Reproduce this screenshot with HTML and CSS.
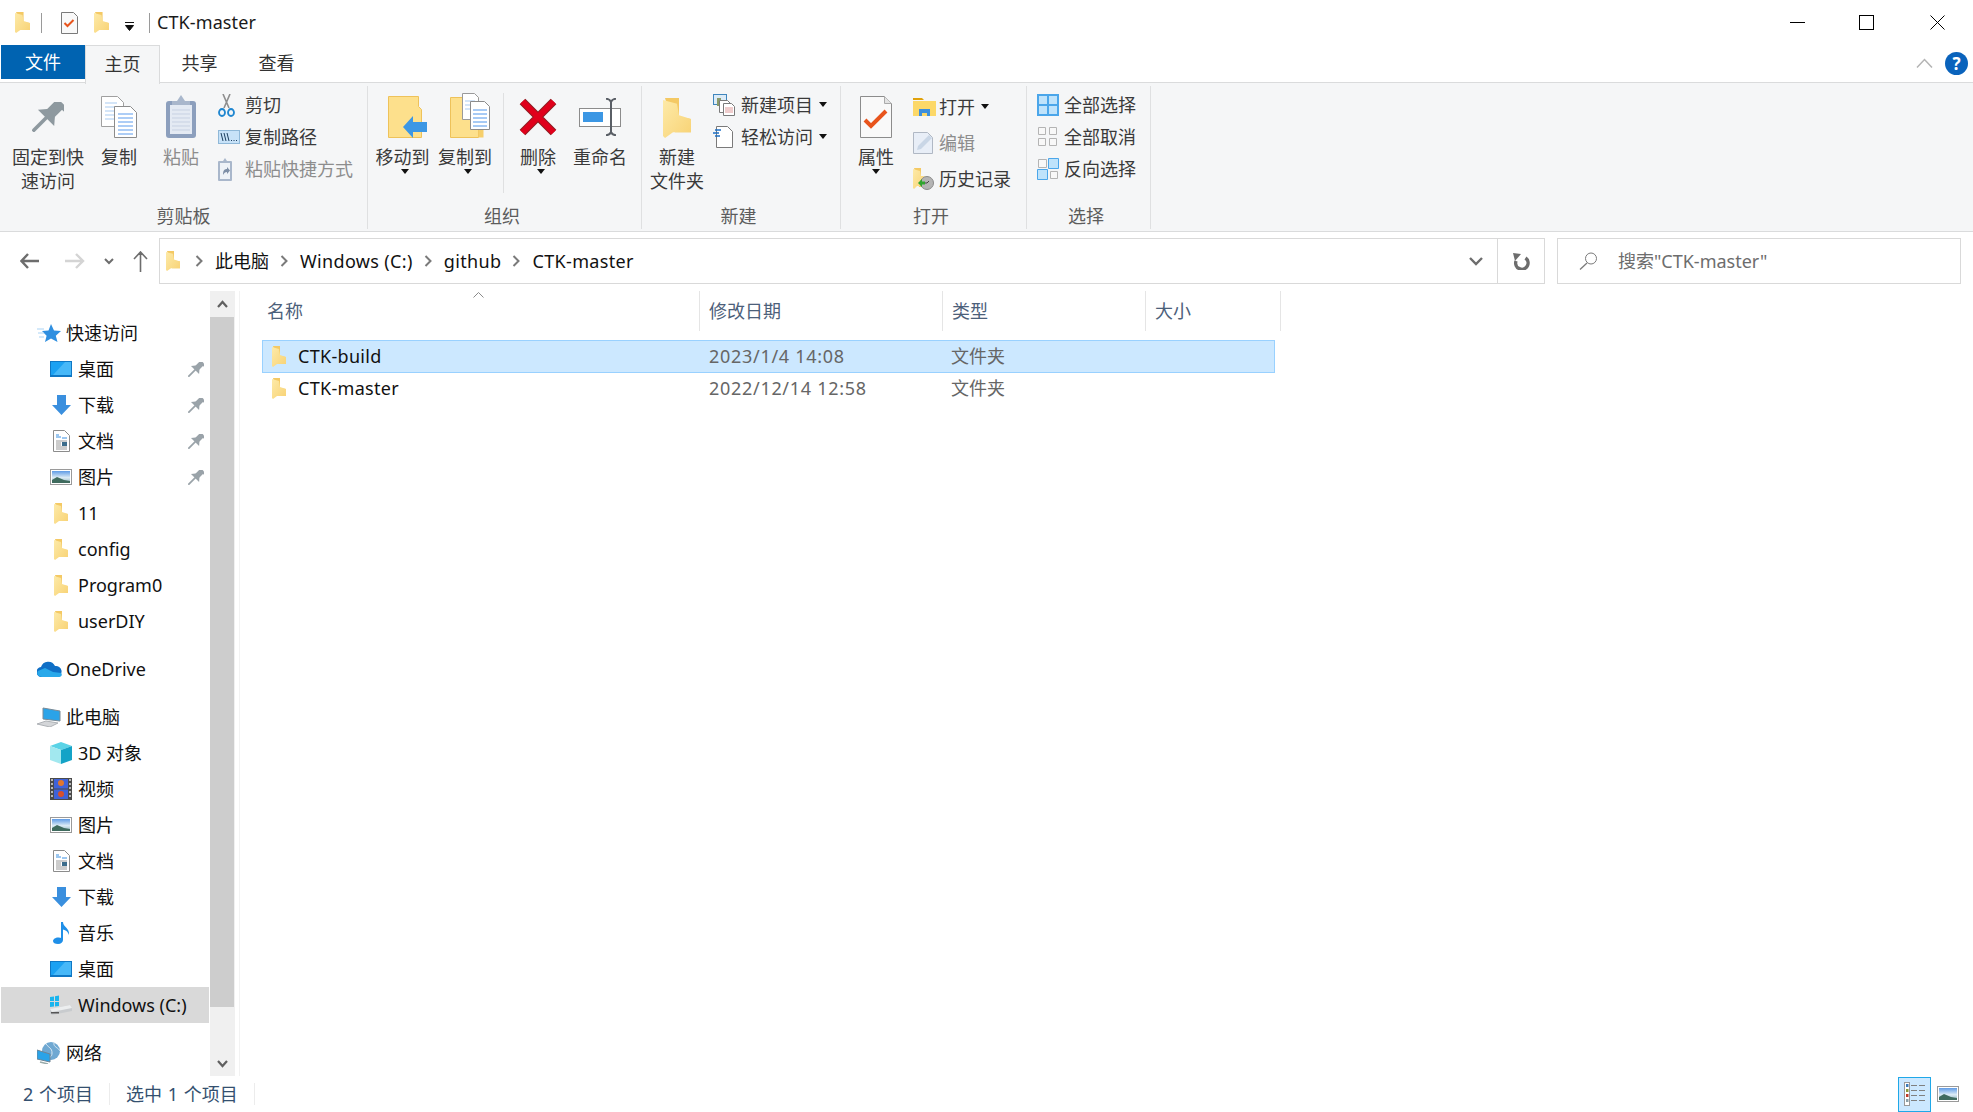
FILE: index.html
```html
<!DOCTYPE html>
<html lang="zh-CN">
<head>
    <meta charset="UTF-8">
    <title>CTK-master</title>
    <link rel="stylesheet" href="styles.css">
</head>
<body>

<svg class="defs" xmlns="http://www.w3.org/2000/svg">
    <defs>
        <linearGradient id="fold" x1="0" y1="0" x2="1" y2="1">
            <stop offset="0" stop-color="#fdeaa8"/>
            <stop offset="1" stop-color="#f8d274"/>
        </linearGradient>
        <linearGradient id="sky" x1="0" y1="0" x2="0" y2="1">
            <stop offset="0" stop-color="#5f9be6"/>
            <stop offset=".55" stop-color="#dcebf5"/>
            <stop offset="1" stop-color="#8fb3bd"/>
        </linearGradient>
    </defs>

    <symbol id="folder" viewBox="0 0 14 21" preserveAspectRatio="none">
        <path d="M1 0h7v10l6 1v7H6z" fill="#f4c964"/>
        <path d="M0 1l7 2 1 6 6 2v7H5l-4 3-1-1z" fill="url(#fold)"/>
    </symbol>
    <symbol id="pin" viewBox="0 0 32 30" preserveAspectRatio="none">
        <g transform="translate(19 11) rotate(45)" fill="currentColor">
            <rect x="-8" y="-15" width="16" height="5"/>
            <rect x="-5.500" y="-12" width="11" height="14"/>
            <path d="M-5.500 0h11l6 7h-23z"/>
            <rect x="-1.800" y="6" width="3.600" height="20"/>
        </g>
    </symbol>
    <symbol id="copy" viewBox="0 0 36 42" preserveAspectRatio="none">
        <path d="M.5.5h16l6 6v24H.5z" fill="#fff" stroke="#a0a0a0"/>
        <path d="M4 7h12M4 11h15M4 15h15M4 19h15M4 23h10" stroke="#a9cbf2" stroke-width="1.2"/>
        <path d="M13.5 10.500h16l6 6v25h-22z" fill="#fff" stroke="#8c8c8c"/>
        <path d="M17 18h15M17 22h15M17 26h15M17 30h15M17 34h15M17 38h15" stroke="#5c9cee" stroke-width="1.2"/>
    </symbol>
    <symbol id="paste" viewBox="0 0 30 43" preserveAspectRatio="none">
        <rect x="0" y="6" width="30" height="37" rx="3" fill="#8c9fbd"/>
        <rect x="4" y="10" width="22" height="29" fill="#e4eaf3"/>
        <path d="M6 15h18M6 19h18M6 23h18M6 27h18M6 31h18M6 35h18" stroke="#c7d1e2"/>
        <path d="M15 0l4 6h5v4H6V6h5z" fill="#a9b7cc"/>
    </symbol>
    <symbol id="scissors" viewBox="0 0 17 23" preserveAspectRatio="none">
        <path d="M5 0l6 14M12 0L6 14" stroke="#8e8e8e" stroke-width="1.600" fill="none"/>
        <ellipse cx="4" cy="18.500" rx="3" ry="3.500" fill="none" stroke="#1f86d0" stroke-width="1.800"/>
        <ellipse cx="13" cy="18.500" rx="3" ry="3.500" fill="none" stroke="#1f86d0" stroke-width="1.800"/>
    </symbol>
    <symbol id="copypath" viewBox="0 0 22 14" preserveAspectRatio="none">
        <rect x=".5" y=".5" width="21" height="13" fill="#c7e2f8" stroke="#8fb8d8"/>
        <path d="M3 3l2 8M6 3l2 8M9 3l2 8" stroke="#1c3f5f" fill="none"/>
        <path d="M13 10.500h1M15.500 10.500h1M18 10.500h1" stroke="#1c3f5f"/>
    </symbol>
    <symbol id="shortcut" viewBox="0 0 14 23" preserveAspectRatio="none">
        <rect x="0" y="3" width="14" height="20" rx="1" fill="#a9b7cb"/>
        <rect x="2" y="5" width="10" height="16" fill="#eef2f7"/>
        <path d="M7 0l2 3H5z" fill="#a9b7cb"/>
        <path d="M5 17c0-4 1-6 4-6V9l3 3.500-3 3.500v-2c-2 0-3 1-4 3z" fill="#7d8ea6"/>
    </symbol>
    <symbol id="moveto" viewBox="0 0 39 42" preserveAspectRatio="none">
        <path d="M.5.5h30v10l3 3v28H.5z" fill="#fde08c" stroke="#eec25a"/>
        <path d="M15 31l10-11v6h14v10H25v6z" fill="#3c97e4"/>
    </symbol>
    <symbol id="copyto" viewBox="0 0 40 45" preserveAspectRatio="none">
        <path d="M.5 4.500h28v40H.5z" fill="#fde08c" stroke="#eec25a"/>
        <path d="M28.500 20h5v24.500h-5z" fill="#f6cf6b"/>
        <path d="M12.500.500h12l4 4v22h-16z" fill="#fff" stroke="#9a9a9a"/>
        <path d="M15 8h10M15 12h10M15 16h10" stroke="#a9cbf2"/>
        <path d="M20.500 8.500h14l5 5v23h-19z" fill="#fff" stroke="#8c8c8c"/>
        <path d="M23 17h14M23 21h14M23 25h14M23 29h14M23 33h14" stroke="#4f95ea"/>
    </symbol>
    <symbol id="del" viewBox="0 0 38 38" preserveAspectRatio="none">
        <path d="M3.500 3.500l31 31M34.500 3.500l-31 31" stroke="#8f1d22" stroke-width="8" fill="none"/>
        <path d="M3.500 3.500l31 31M34.500 3.500l-31 31" stroke="#e0001b" stroke-width="6" fill="none"/>
    </symbol>
    <symbol id="rename" viewBox="0 0 42 38" preserveAspectRatio="none">
        <rect x=".5" y="10.500" width="41" height="18" fill="#fff" stroke="#8c8c8c"/>
        <rect x="4" y="14" width="20" height="10" fill="#3c97e4"/>
        <path d="M27 .8c3 0 4 1 5 3 1-2 2-3 5-3M27 37.200c3 0 4-1 5-3 1 2 2 3 5 3M32 4v30" stroke="#5a5f66" stroke-width="2" fill="none"/>
    </symbol>
    <symbol id="newitem" viewBox="0 0 22 22" preserveAspectRatio="none">
        <rect x=".5" y=".5" width="13" height="10" fill="#dcebf7" stroke="#3f86bd"/>
        <rect x="4" y="4" width="4" height="8" fill="#8a9a6a"/>
        <path d="M6.500 6.500h8l3 3v9h-11z" fill="#fff" stroke="#7a7a7a"/>
        <path d="M10.500 9.500h8l3 3v9h-11z" fill="#fff" stroke="#7a7a7a"/>
        <path d="M12 14h8M12 16h8M12 18h8" stroke="#e09a9a"/>
    </symbol>
    <symbol id="easy" viewBox="0 0 20 22" preserveAspectRatio="none">
        <path d="M3.500.5h11l5 5v16h-16z" fill="#fff" stroke="#7a7a7a"/>
        <path d="M2 4h6M0 7h6M2 10h5" stroke="#1c6fc4" stroke-width="1.300"/>
    </symbol>
    <symbol id="props" viewBox="0 0 32 42" preserveAspectRatio="none">
        <path d="M.5.5h24l7 7v34H.5z" fill="#f9f9f9" stroke="#8c8c8c"/>
        <path d="M24.500.5v7h7" fill="#e3e3e3" stroke="#aaa"/>
        <path d="M5 24l6 6 15-15" fill="none" stroke="#e8541c" stroke-width="4"/>
    </symbol>
    <symbol id="doccheck" viewBox="0 0 17 22" preserveAspectRatio="none">
        <path d="M.5.5h12l4 4v17H.5z" fill="#f9f9f9" stroke="#7a7a7a"/>
        <path d="M3.500 11l3 3 6-6" fill="none" stroke="#e8541c" stroke-width="2"/>
    </symbol>
    <symbol id="open" viewBox="0 0 23 18" preserveAspectRatio="none">
        <path d="M0 0h9l2 2h-11z" fill="#e0a10b"/>
        <path d="M0 3h23v15H0z" fill="#fcd868"/>
        <path d="M6 18v-7h11v7h-3v-3H9v3z" fill="#3c8fdb"/>
    </symbol>
    <symbol id="edit" viewBox="0 0 21 22" preserveAspectRatio="none">
        <path d="M.5.5h14l5 5v16H.5z" fill="#e8eef7" stroke="#b0b8c4"/>
        <path d="M4 18l1-4L16 3l3 3L8 17z" fill="#c9d6e6"/>
    </symbol>
    <symbol id="history" viewBox="0 0 21 22" preserveAspectRatio="none">
        <path d="M1 0h7v8l5 1v10H6z" fill="#f4c964"/>
        <path d="M0 1l7 2 1 5 5 1v9H4l-3 3-1-1z" fill="url(#fold)"/>
        <circle cx="14" cy="15" r="6.500" fill="#b4b4b4" stroke="#8a8a8a"/>
        <path d="M11 15h3l2-2" stroke="#444" fill="none"/>
        <path d="M5 15l4-4v2.500h3v3H9V19z" fill="#2fa52f"/>
    </symbol>
    <symbol id="selall" viewBox="0 0 22 22" preserveAspectRatio="none">
        <rect x="1" y="1" width="20" height="20" fill="#bfe3fb" stroke="#4ba6ea" stroke-width="2"/>
        <path d="M11 1v20M1 11h20" stroke="#4ba6ea" stroke-width="2"/>
    </symbol>
    <symbol id="selnone" viewBox="0 0 22 22" preserveAspectRatio="none">
        <path d="M1.500 1.500h7v7h-7zM12.500 1.500h7v7h-7zM1.500 12.500h7v7h-7zM12.500 12.500h7v7h-7z" fill="#f8f8f8" stroke="#b4b4b4"/>
    </symbol>
    <symbol id="selinv" viewBox="0 0 22 22" preserveAspectRatio="none">
        <path d="M1.500 1.500h8v8h-8zM13.500 13.500h7v7h-7z" fill="#f8f8f8" stroke="#b4b4b4"/>
        <path d="M11.500.5h10v10h-10zM.5 11.500h10v10H.5z" fill="#bfe3fb" stroke="#4ba6ea"/>
    </symbol>

    <symbol id="star" viewBox="0 0 24 18" preserveAspectRatio="none">
        <path d="M14 0l3 6.500 7 .5-5.200 4.700L20.500 18 14 14.500 8 18l1.600-6.300L5 7l6.500-.5z" fill="#2f8fe0"/>
        <path d="M0 5h7M1 9h6M2 13h5" stroke="#a9d3f5"/>
    </symbol>
    <symbol id="desktop" viewBox="0 0 22 16" preserveAspectRatio="none">
        <rect x="0" y="0" width="22" height="16" fill="#0f77c4"/>
        <rect x="1" y="1" width="20" height="13" fill="#1ba1f2"/>
        <path d="M3 14L15 1h6v13z" fill="#47b8f8"/>
    </symbol>
    <symbol id="down" viewBox="0 0 19 20" preserveAspectRatio="none">
        <path d="M5 0h9v10h5l-9.500 10L0 10h5z" fill="#3a8fde"/>
    </symbol>
    <symbol id="doc" viewBox="0 0 17 22" preserveAspectRatio="none">
        <path d="M.5.5h11l5 5v16H.5z" fill="#fff" stroke="#8c8c8c"/>
        <path d="M3 5h3M3 7h5M9 8h5" stroke="#3b8fe0"/>
        <path d="M3 11h11M3 13h5M3 15h5M3 17h11M3 19h11" stroke="#9a9a9a"/>
        <rect x="9" y="12" width="5" height="4" fill="#3d6d8c"/>
    </symbol>
    <symbol id="pic" viewBox="0 0 22 16" preserveAspectRatio="none">
        <rect x=".5" y=".5" width="21" height="15" fill="#fff" stroke="#9a9a9a"/>
        <rect x="2" y="2" width="18" height="12" fill="url(#sky)"/>
        <path d="M2 11l5-3 7 3 6 1v2H2z" fill="#3f6b5e"/>
    </symbol>
    <symbol id="cloud" viewBox="0 0 25 16" preserveAspectRatio="none">
        <path d="M5 16a5 5 0 0 1-1-10 7.500 7.500 0 0 1 14-1 5.500 5.500 0 0 1 2 11z" fill="#0f6fc6"/>
        <path d="M5 16c-4 0-6-3-4-6l7-3 8 4 8 1c2 2 0 4-3 4z" fill="#28a8ea"/>
    </symbol>
    <symbol id="pc" viewBox="0 0 24 20" preserveAspectRatio="none">
        <path d="M6 1l17 3v10L6 12z" fill="#2aa3e8" stroke="#7a8a96"/>
        <path d="M0 17l9-3 12 2-8 4z" fill="#d4d6d9" stroke="#aeb2b6"/>
    </symbol>
    <symbol id="cube" viewBox="0 0 22 22" preserveAspectRatio="none">
        <path d="M11 0l11 4-11 4L0 4z" fill="#5ad3e6"/>
        <path d="M0 4l11 4v14L0 18z" fill="#a2e8ef"/>
        <path d="M22 4L11 8v14l11-4z" fill="#14a3c7"/>
    </symbol>
    <symbol id="film" viewBox="0 0 22 22" preserveAspectRatio="none">
        <rect width="22" height="22" fill="#4a4a4a"/>
        <rect x="4" y="1" width="14" height="9.500" fill="#3f62d8"/>
        <rect x="4" y="11.500" width="14" height="9.500" fill="#3f62d8"/>
        <circle cx="11" cy="5" r="3" fill="#e2762b"/>
        <circle cx="11" cy="16" r="3" fill="#d8502b"/>
        <path d="M1 2h2M1 6h2M1 10h2M1 14h2M1 18h2M19 2h2M19 6h2M19 10h2M19 14h2M19 18h2" stroke="#ddd" stroke-width="1.500"/>
    </symbol>
    <symbol id="music" viewBox="0 0 17 22" preserveAspectRatio="none">
        <path d="M8 0h2c0 5 7 6 6 13-1-3-3-5-6-5.500V18c0 2-2 4-5 4s-5-1-5-3 3-4 6-3.500 2 .5 2 .5z" fill="#1f8fe8"/>
    </symbol>
    <symbol id="drive" viewBox="0 0 22 20" preserveAspectRatio="none">
        <path d="M0 14l20-4 2 3v3L2 20l-2-2z" fill="#c8cbce"/>
        <path d="M0 14l20-4 2 3-20 4z" fill="#eceeef"/>
        <rect x="1" y="17" width="8" height="1.500" fill="#555"/>
        <path d="M0 2l4-.6V6H0zM5 1.200L9 .5V6H5zM0 7h4v4.500L0 12zM5 7h4v4l-4 .6z" fill="#19b5ee"/>
    </symbol>
    <symbol id="net" viewBox="0 0 24 22" preserveAspectRatio="none">
        <circle cx="14" cy="9" r="9" fill="#6fa8d2"/>
        <path d="M9 2c3 4 6 4 6 9s-3 3-3 6M17 1c-1 4 5 5 6 8" stroke="#d9e8f2" fill="none"/>
        <path d="M0 8l13 4v8L0 17z" fill="#2aa3e8" stroke="#6f8494"/>
        <path d="M3 20l8 2" stroke="#9aa" stroke-width="1.500"/>
    </symbol>
</svg>

<div class="window">

    <div class="titlebar">
        <svg class="ic" width="15" height="21"><use href="#folder"/></svg>
        <span class="tsep tsep-a"></span>
        <svg class="ic" width="17" height="22"><use href="#doccheck"/></svg>
        <svg class="ic qa-folder" width="15" height="21"><use href="#folder"/></svg>
        <svg class="ic qa-drop" width="9" height="9" viewBox="0 0 9 9"><path d="M0 .5h9M.5 3.500h8L4.500 8.500z" stroke="#111" fill="#111"/></svg>
        <span class="tsep tsep-b"></span>
        <span class="title">CTK-master</span>
        <div class="winbtns">
            <svg width="15" height="15" viewBox="0 0 15 15"><path d="M0 7.500h15" stroke="#000"/></svg>
            <svg width="15" height="15" viewBox="0 0 15 15"><rect x=".5" y=".5" width="14" height="14" fill="none" stroke="#000"/></svg>
            <svg width="15" height="15" viewBox="0 0 15 15"><path d="M.5.5l14 14M14.500.5l-14 14" stroke="#000"/></svg>
        </div>
    </div>

    <div class="tabs">
        <div class="tab tab-file">文件</div>
        <div class="tab tab-on">主页</div>
        <div class="tab tab-share">共享</div>
        <div class="tab tab-view">查看</div>
        <div class="tabs-right">
            <svg width="17" height="10" viewBox="0 0 17 10"><path d="M1 9.500l7.500-8 7.500 8" fill="none" stroke="#b4b4b4" stroke-width="1.500"/></svg>
            <div class="help">?</div>
        </div>
    </div>

    <div class="ribbon">
        <div class="group group-clip">
            <div class="gbody">
                <div class="big big-pin">
                    <div class="bigic"><svg class="pin-big" width="32" height="30"><use href="#pin"/></svg></div>
                    <div>固定到快<br>速访问</div>
                </div>
                <div class="big big-copy">
                    <div class="bigic"><svg width="36" height="42"><use href="#copy"/></svg></div>
                    <div>复制</div>
                </div>
                <div class="big big-paste off">
                    <div class="bigic"><svg width="30" height="43"><use href="#paste"/></svg></div>
                    <div>粘贴</div>
                </div>
                <div class="smalls">
                    <div class="small"><span class="smic"><svg width="17" height="23"><use href="#scissors"/></svg></span>剪切</div>
                    <div class="small"><span class="smic"><svg width="22" height="14"><use href="#copypath"/></svg></span>复制路径</div>
                    <div class="small off"><span class="smic"><svg width="14" height="23"><use href="#shortcut"/></svg></span>粘贴快捷方式</div>
                </div>
            </div>
            <div class="glabel">剪贴板</div>
        </div>

        <div class="group group-org">
            <div class="gbody">
                <div class="big big-move">
                    <div class="bigic"><svg class="ic-shift" width="39" height="42"><use href="#moveto"/></svg></div>
                    <div>移动到</div><i class="caret caret-r"></i>
                </div>
                <div class="big big-copyto">
                    <div class="bigic"><svg class="ic-shift" width="40" height="45"><use href="#copyto"/></svg></div>
                    <div>复制到</div><i class="caret caret-r"></i>
                </div>
                <span class="innersep"></span>
                <div class="big big-del">
                    <div class="bigic"><svg width="38" height="38"><use href="#del"/></svg></div>
                    <div>删除</div><i class="caret caret-r"></i>
                </div>
                <div class="big big-ren">
                    <div class="bigic"><svg width="42" height="38"><use href="#rename"/></svg></div>
                    <div>重命名</div>
                </div>
            </div>
            <div class="glabel">组织</div>
        </div>

        <div class="group group-new">
            <div class="gbody">
                <div class="big big-newf">
                    <div class="bigic"><svg width="28" height="40"><use href="#folder"/></svg></div>
                    <div>新建<br>文件夹</div>
                </div>
                <div class="smalls smalls-new">
                    <div class="small"><span class="smic"><svg width="22" height="22"><use href="#newitem"/></svg></span>新建项目<i class="caret"></i></div>
                    <div class="small"><span class="smic"><svg width="20" height="22"><use href="#easy"/></svg></span>轻松访问<i class="caret"></i></div>
                </div>
            </div>
            <div class="glabel">新建</div>
        </div>

        <div class="group group-open">
            <div class="gbody">
                <div class="big big-props">
                    <div class="bigic"><svg width="32" height="42"><use href="#props"/></svg></div>
                    <div>属性</div><i class="caret"></i>
                </div>
                <div class="smalls smalls-open">
                    <div class="small"><span class="smic"><svg width="23" height="18"><use href="#open"/></svg></span>打开<i class="caret"></i></div>
                    <div class="small off"><span class="smic"><svg width="21" height="22"><use href="#edit"/></svg></span>编辑</div>
                    <div class="small"><span class="smic"><svg width="21" height="22"><use href="#history"/></svg></span>历史记录</div>
                </div>
            </div>
            <div class="glabel">打开</div>
        </div>

        <div class="group group-sel">
            <div class="gbody">
                <div class="smalls smalls-sel">
                    <div class="small"><span class="smic"><svg width="22" height="22"><use href="#selall"/></svg></span>全部选择</div>
                    <div class="small"><span class="smic"><svg width="22" height="22"><use href="#selnone"/></svg></span>全部取消</div>
                    <div class="small"><span class="smic"><svg width="22" height="22"><use href="#selinv"/></svg></span>反向选择</div>
                </div>
            </div>
            <div class="glabel">选择</div>
        </div>
    </div>

    <div class="addrbar">
        <svg class="nav-back" width="19" height="16" viewBox="0 0 19 16"><path d="M8 1L1.500 8 8 15M2 8h17" fill="none" stroke="#6d6d6d" stroke-width="2.400"/></svg>
        <svg class="nav-fwd" width="20" height="16" viewBox="0 0 20 16"><path d="M11 1l7 7-7 7M18 8H0" fill="none" stroke="#d4d4d4" stroke-width="2.400"/></svg>
        <svg class="nav-drop" width="10" height="7" viewBox="0 0 10 7"><path d="M1 1l4 4 4-4" fill="none" stroke="#6d6d6d" stroke-width="2"/></svg>
        <svg class="nav-up" width="15" height="21" viewBox="0 0 15 21"><path d="M1 8l6.500-7L14 8M7.500 1v20" fill="none" stroke="#6d6d6d" stroke-width="1.600"/></svg>
        <div class="addr">
            <svg class="ic" width="14" height="20"><use href="#folder"/></svg>
            <svg class="chev chev-first" width="8" height="12" viewBox="0 0 8 12"><path d="M1.500 1l5 5-5 5" fill="none" stroke="#7a7a7a" stroke-width="2"/></svg>
            <span>此电脑</span>
            <svg class="chev" width="8" height="12" viewBox="0 0 8 12"><path d="M1.500 1l5 5-5 5" fill="none" stroke="#7a7a7a" stroke-width="2"/></svg>
            <span class="latin">Windows (C:)</span>
            <svg class="chev" width="8" height="12" viewBox="0 0 8 12"><path d="M1.500 1l5 5-5 5" fill="none" stroke="#7a7a7a" stroke-width="2"/></svg>
            <span class="latin">github</span>
            <svg class="chev" width="8" height="12" viewBox="0 0 8 12"><path d="M1.500 1l5 5-5 5" fill="none" stroke="#7a7a7a" stroke-width="2"/></svg>
            <span class="latin">CTK-master</span>
            <svg class="addr-drop" width="14" height="9" viewBox="0 0 14 9"><path d="M1 1l6 6 6-6" fill="none" stroke="#6d6d6d" stroke-width="2.400"/></svg>
        </div>
        <div class="refresh">
            <svg width="17" height="17" viewBox="0 0 17 17"><path d="M3 8A6.200 6.200 0 1 0 12.500 5" fill="none" stroke="#6d6d6d" stroke-width="3.400"/><path d="M0 0l8 1-6 7z" fill="#6d6d6d"/></svg>
        </div>
        <div class="search">
            <svg width="19" height="18" viewBox="0 0 19 18"><circle cx="12" cy="6.500" r="5.500" fill="none" stroke="#7a7a7a"/><path d="M8 11l-7 6.500" stroke="#7a7a7a" stroke-width="1.300"/></svg>
            <span>搜索"CTK-master"</span>
        </div>
    </div>

    <div class="main">
        <div class="side">
            <div class="tree">
                <div class="sec">
                    <div class="node top"><span class="nic"><svg width="24" height="18"><use href="#star"/></svg></span>快速访问</div>
                    <div class="node"><span class="nic"><svg width="22" height="16"><use href="#desktop"/></svg></span>桌面<svg class="pinned" width="16" height="15"><use href="#pin"/></svg></div>
                    <div class="node"><span class="nic"><svg width="19" height="20"><use href="#down"/></svg></span>下载<svg class="pinned" width="16" height="15"><use href="#pin"/></svg></div>
                    <div class="node"><span class="nic"><svg width="17" height="22"><use href="#doc"/></svg></span>文档<svg class="pinned" width="16" height="15"><use href="#pin"/></svg></div>
                    <div class="node"><span class="nic"><svg width="22" height="16"><use href="#pic"/></svg></span>图片<svg class="pinned" width="16" height="15"><use href="#pin"/></svg></div>
                    <div class="node"><span class="nic"><svg width="14" height="21"><use href="#folder"/></svg></span>11</div>
                    <div class="node"><span class="nic"><svg width="14" height="21"><use href="#folder"/></svg></span>config</div>
                    <div class="node"><span class="nic"><svg width="14" height="21"><use href="#folder"/></svg></span>Program0</div>
                    <div class="node"><span class="nic"><svg width="14" height="21"><use href="#folder"/></svg></span>userDIY</div>
                </div>
                <div class="sec">
                    <div class="node top"><span class="nic"><svg width="25" height="16"><use href="#cloud"/></svg></span>OneDrive</div>
                </div>
                <div class="sec">
                    <div class="node top"><span class="nic"><svg width="24" height="20"><use href="#pc"/></svg></span>此电脑</div>
                    <div class="node"><span class="nic"><svg width="22" height="22"><use href="#cube"/></svg></span>3D 对象</div>
                    <div class="node"><span class="nic"><svg width="22" height="22"><use href="#film"/></svg></span>视频</div>
                    <div class="node"><span class="nic"><svg width="22" height="16"><use href="#pic"/></svg></span>图片</div>
                    <div class="node"><span class="nic"><svg width="17" height="22"><use href="#doc"/></svg></span>文档</div>
                    <div class="node"><span class="nic"><svg width="19" height="20"><use href="#down"/></svg></span>下载</div>
                    <div class="node"><span class="nic"><svg width="17" height="22"><use href="#music"/></svg></span>音乐</div>
                    <div class="node"><span class="nic"><svg width="22" height="16"><use href="#desktop"/></svg></span>桌面</div>
                    <div class="node node-sel"><span class="nic"><svg width="22" height="20"><use href="#drive"/></svg></span>Windows (C:)</div>
                </div>
                <div class="sec">
                    <div class="node top"><span class="nic"><svg width="24" height="22"><use href="#net"/></svg></span>网络</div>
                </div>
            </div>
            <div class="scroll">
                <div class="sbtn"><svg width="11" height="8" viewBox="0 0 11 8"><path d="M1 7l4.500-5L10 7" fill="none" stroke="#606060" stroke-width="2.200"/></svg></div>
                <div class="thumb"></div>
                <div class="strack"><svg width="11" height="8" viewBox="0 0 11 8"><path d="M1 1l4.500 5L10 1" fill="none" stroke="#606060" stroke-width="2.200"/></svg></div>
            </div>
        </div>

        <div class="files">
            <svg class="sortarrow" width="11" height="6" viewBox="0 0 11 6"><path d="M.5 5.500l5-5 5 5" fill="none" stroke="#8a8a8a"/></svg>
            <div class="cols">
                <div class="col col-name">名称</div>
                <div class="col col-date">修改日期</div>
                <div class="col col-type">类型</div>
                <div class="col col-size">大小</div>
            </div>
            <div class="row row-sel">
                <div class="cell-name"><svg width="14" height="21"><use href="#folder"/></svg><span>CTK-build</span></div>
                <div class="cell-dim cell-date">2023/1/4 14:08</div>
                <div class="cell-dim">文件夹</div>
            </div>
            <div class="row">
                <div class="cell-name"><svg width="14" height="21"><use href="#folder"/></svg><span>CTK-master</span></div>
                <div class="cell-dim cell-date">2022/12/14 12:58</div>
                <div class="cell-dim">文件夹</div>
            </div>
        </div>
    </div>

    <div class="status">
        <span class="st-a">2 个项目</span>
        <span class="st-sep"></span>
        <span class="st-b">选中 1 个项目</span>
        <span class="st-sep"></span>
        <div class="views">
            <div class="view-on">
                <svg width="21" height="24" viewBox="0 0 21 24">
                    <rect x=".5" y=".5" width="5" height="23" fill="#fff" stroke="#999"/>
                    <rect x="2" y="2" width="2.500" height="3" fill="#3a7ab8"/>
                    <rect x="2" y="7" width="2.500" height="3" fill="#8a9a3a"/>
                    <rect x="2" y="12" width="2.500" height="3" fill="#c03a2a"/>
                    <rect x="2" y="17" width="2.500" height="3" fill="#8aa0a8"/>
                    <path d="M7 3.500h6M15 3.500h6M7 8.500h6M15 8.500h6M7 13.500h6M15 13.500h6M7 18.500h6M15 18.500h6" stroke="#808080"/>
                </svg>
            </div>
            <svg width="22" height="16"><use href="#pic"/></svg>
        </div>
    </div>
</div>

</body>
</html>
```

FILE: styles.css
```css
html, body {
    margin: 0;
    height: 100%;
    background: #fff;
}
body {
    font-family: "Noto Sans", "Noto Sans CJK SC", sans-serif;
    font-size: 18px;
    line-height: 24px;
    color: #1a1a1a;
    overflow: hidden;
}
svg {
    display: block;
    flex: none;
}
.defs {
    width: 0;
    height: 0;
}
.window {
    display: flex;
    flex-direction: column;
    height: 1112px;
}

/* title bar */
.titlebar {
    display: flex;
    align-items: center;
    height: 45px;
    padding-left: 15px;
    padding-right: 28px;
}
.tsep {
    width: 1px;
    height: 20px;
    background: #9a9a9a;
}
.tsep-a {
    margin-left: 11px;
    margin-right: 19px;
}
.qa-folder {
    margin-left: 16px;
}
.qa-drop {
    margin-left: 16px;
    margin-right: 15px;
    margin-top: 8px;
}
.tsep-b {
    margin-right: 7px;
}
.title {
    margin-top: -2px;
    letter-spacing: .1px;
}
.winbtns {
    margin-left: auto;
    display: flex;
    gap: 54px;
}
.winbtns svg + svg + svg {
    margin-left: 2px;
}

/* tabs */
.tabs {
    display: flex;
    height: 37px;
    padding-left: 1px;
    border-bottom: 1px solid #dadbdc;
}
.tab {
    text-align: center;
    line-height: 36px;
    color: #333;
}
.tab-file {
    width: 84px;
    height: 34px;
    line-height: 34px;
    background: #0063b1;
    color: #fff;
}
.tab-on {
    width: 73px;
    height: 37px;
    background: #f5f6f7;
    border: 1px solid #dadbdc;
    border-bottom: 0;
    position: relative;
    z-index: 1;
    margin-bottom: -1px;
    padding-bottom: 1px;
}
.tab-share {
    width: 79px;
}
.tab-view {
    width: 75px;
}
.tabs-right {
    margin-left: auto;
    display: flex;
    align-items: center;
    gap: 12px;
    padding-right: 5px;
    height: 36px;
}
.help {
    width: 23px;
    height: 23px;
    border-radius: 50%;
    background: #0a63bc;
    color: #fff;
    font-size: 17px;
    font-weight: 700;
    line-height: 23px;
    text-align: center;
}

/* ribbon */
.ribbon {
    display: flex;
    height: 149px;
    padding-top: 3px;
    padding-bottom: 2px;
    box-sizing: border-box;
    background: #f5f6f7;
    border-bottom: 1px solid #dadbdc;
    color: #3a3a3a;
}
.group {
    display: flex;
    flex-direction: column;
    border-right: 1px solid #dfe0e1;
    box-sizing: border-box;
}
.group-clip { width: 368px; }
.group-org { width: 274px; }
.group-new { width: 199px; }
.group-open { width: 186px; }
.group-sel { width: 124px; }
.gbody {
    display: flex;
    height: 117px;
}
.glabel {
    height: 26px;
    line-height: 26px;
    text-align: center;
    padding-right: 5px;
    color: #5c5c5c;
}
.group-clip .glabel { padding-right: 0; }
.group-clip .gbody { padding-left: 5px; }
.group-org .gbody { padding-left: 4px; }
.group-sel .gbody { padding-left: 8px; }
.big {
    display: flex;
    flex-direction: column;
    align-items: center;
    text-align: center;
    flex: none;
}
.bigic {
    height: 59px;
    display: flex;
    align-items: flex-end;
    justify-content: center;
    padding-bottom: 7px;
    box-sizing: border-box;
}
.pin-big {
    color: #8e999f;
    margin-bottom: 6px;
}
.ic-shift {
    margin-left: 10px;
}
.big-pin { width: 86px; }
.big-copy { width: 56px; }
.big-paste { width: 68px; }
.big-move { width: 61px; }
.big-copyto { width: 64px; }
.big-del { width: 68px; }
.big-ren { width: 56px; }
.big-del .bigic, .big-ren .bigic { padding-bottom: 9px; }
.big-newf { width: 70px; }
.big-props { width: 70px; }
.off {
    color: #8d8d8d;
}
.caret {
    display: block;
    width: 0;
    height: 0;
    border-left: 4px solid transparent;
    border-right: 4px solid transparent;
    border-top: 5px solid #111;
}
.caret-r {
    margin-left: 5px;
}
.small .caret {
    margin-left: 6px;
    margin-top: -2px;
}
.innersep {
    width: 1px;
    height: 100px;
    margin-top: 7px;
    margin-left: 6px;
    background: #dfe0e1;
}
.smalls {
    margin-left: 3px;
    padding-top: 3px;
}
.smalls-new, .smalls-open {
    margin-left: 0;
}
.smalls-sel {
    margin-left: 0;
}
.small {
    display: flex;
    align-items: center;
    height: 32px;
}
.smalls-open .small {
    height: 36px;
}
.smic {
    width: 27px;
    flex: none;
    display: flex;
}
.smalls-new .smic { width: 29px; padding-left: 1px; box-sizing: border-box; }
.smalls-open .smic { width: 28px; padding-left: 2px; box-sizing: border-box; }
.smalls-sel .smic { width: 29px; padding-left: 2px; box-sizing: border-box; }

/* address bar */
.addrbar {
    display: flex;
    align-items: center;
    height: 46px;
    margin-top: 6px;
    margin-bottom: 7px;
    padding-left: 20px;
    padding-right: 12px;
    box-sizing: border-box;
}
.nav-fwd { margin-left: 26px; }
.nav-drop { margin-left: 19px; }
.nav-up { margin-left: 19px; margin-right: 11px; }
.addr {
    display: flex;
    align-items: center;
    height: 46px;
    width: 1339px;
    box-sizing: border-box;
    border: 1px solid #d9d9d9;
    padding-left: 6px;
    color: #111;
}
.latin {
    letter-spacing: .35px;
}
.chev {
    margin-left: 11px;
    margin-right: 12px;
}
.chev-first {
    margin-left: 15px;
}
.addr-drop {
    margin-left: auto;
    margin-right: 14px;
}
.refresh {
    width: 47px;
    height: 46px;
    box-sizing: border-box;
    border: 1px solid #d9d9d9;
    border-left: 0;
    display: flex;
    align-items: center;
    justify-content: center;
}
.search {
    display: flex;
    align-items: center;
    gap: 20px;
    width: 404px;
    height: 46px;
    margin-left: 12px;
    padding-left: 21px;
    box-sizing: border-box;
    border: 1px solid #d9d9d9;
    color: #6d6d6d;
}

/* main area */
.main {
    display: flex;
    flex: 1;
    min-height: 0;
}
.side {
    display: flex;
    flex: none;
    width: 239px;
    border-right: 1px solid #f2f2f2;
    box-sizing: content-box;
}
.tree {
    width: 210px;
    padding-top: 24px;
    box-sizing: border-box;
}
.sec {
    margin-bottom: 12px;
}
.node {
    display: flex;
    align-items: center;
    height: 36px;
    margin-left: 1px;
    width: 208px;
    padding-left: 49px;
    box-sizing: border-box;
    color: #111;
}
.node.top {
    padding-left: 36px;
}
.nic {
    width: 22px;
    margin-right: 6px;
    display: flex;
    justify-content: center;
    flex: none;
}
.top .nic {
    width: 24px;
    margin-right: 5px;
}
.node-sel {
    background: #d9d9d9;
}
.pinned {
    margin-left: auto;
    margin-right: 5px;
    color: #9aa3a9;
}
.scroll {
    display: flex;
    flex-direction: column;
    width: 25px;
    flex: none;
    background: #f0f0f0;
}
.sbtn {
    height: 26px;
    display: flex;
    align-items: center;
    justify-content: center;
}
.thumb {
    height: 690px;
    width: 24px;
    background: #cdcdcd;
}
.strack {
    flex: 1;
    display: flex;
    align-items: flex-end;
    justify-content: center;
    padding-bottom: 8px;
}

/* file list */
.files {
    flex: 1;
    position: relative;
}
.sortarrow {
    position: absolute;
    left: 233px;
    top: 1px;
}
.cols {
    display: flex;
    height: 40px;
    margin-bottom: 9px;
    color: #4c607a;
}
.col {
    line-height: 40px;
    border-right: 1px solid #e5e5e5;
    box-sizing: border-box;
}
.col-name { width: 460px; padding-left: 27px; }
.col-date { width: 243px; padding-left: 9px; }
.col-type { width: 203px; padding-left: 9px; }
.col-size { width: 135px; padding-left: 9px; }
.row {
    display: grid;
    grid-template-columns: 446px 242px 1fr;
    align-items: center;
    width: 1013px;
    height: 33px;
    margin-left: 22px;
    box-sizing: border-box;
    border: 1px solid transparent;
}
.row + .row {
    margin-top: -1px;
}
.row-sel {
    background: #cce8ff;
    border-color: #99d1ff;
}
.cell-name {
    display: flex;
    align-items: center;
    gap: 12px;
    padding-left: 9px;
    color: #111;
}
.cell-name span {
    margin-top: -2px;
    letter-spacing: .3px;
}
.cell-dim {
    color: #666;
    margin-top: -2px;
}
.cell-date {
    letter-spacing: .7px;
}

/* status bar */
.status {
    display: flex;
    align-items: center;
    height: 36px;
    padding-left: 23px;
    padding-right: 14px;
    color: #34506f;
    word-spacing: 1px;
}
.st-sep {
    width: 1px;
    height: 22px;
    background: #ececec;
    margin-left: 16px;
    margin-right: 16px;
}
.views {
    margin-left: auto;
    display: flex;
    align-items: center;
    gap: 6px;
}
.view-on {
    width: 33px;
    height: 35px;
    box-sizing: border-box;
    border: 1px solid #1fa8e8;
    background: #cce8ff;
    display: flex;
    align-items: center;
    justify-content: center;
}
```
